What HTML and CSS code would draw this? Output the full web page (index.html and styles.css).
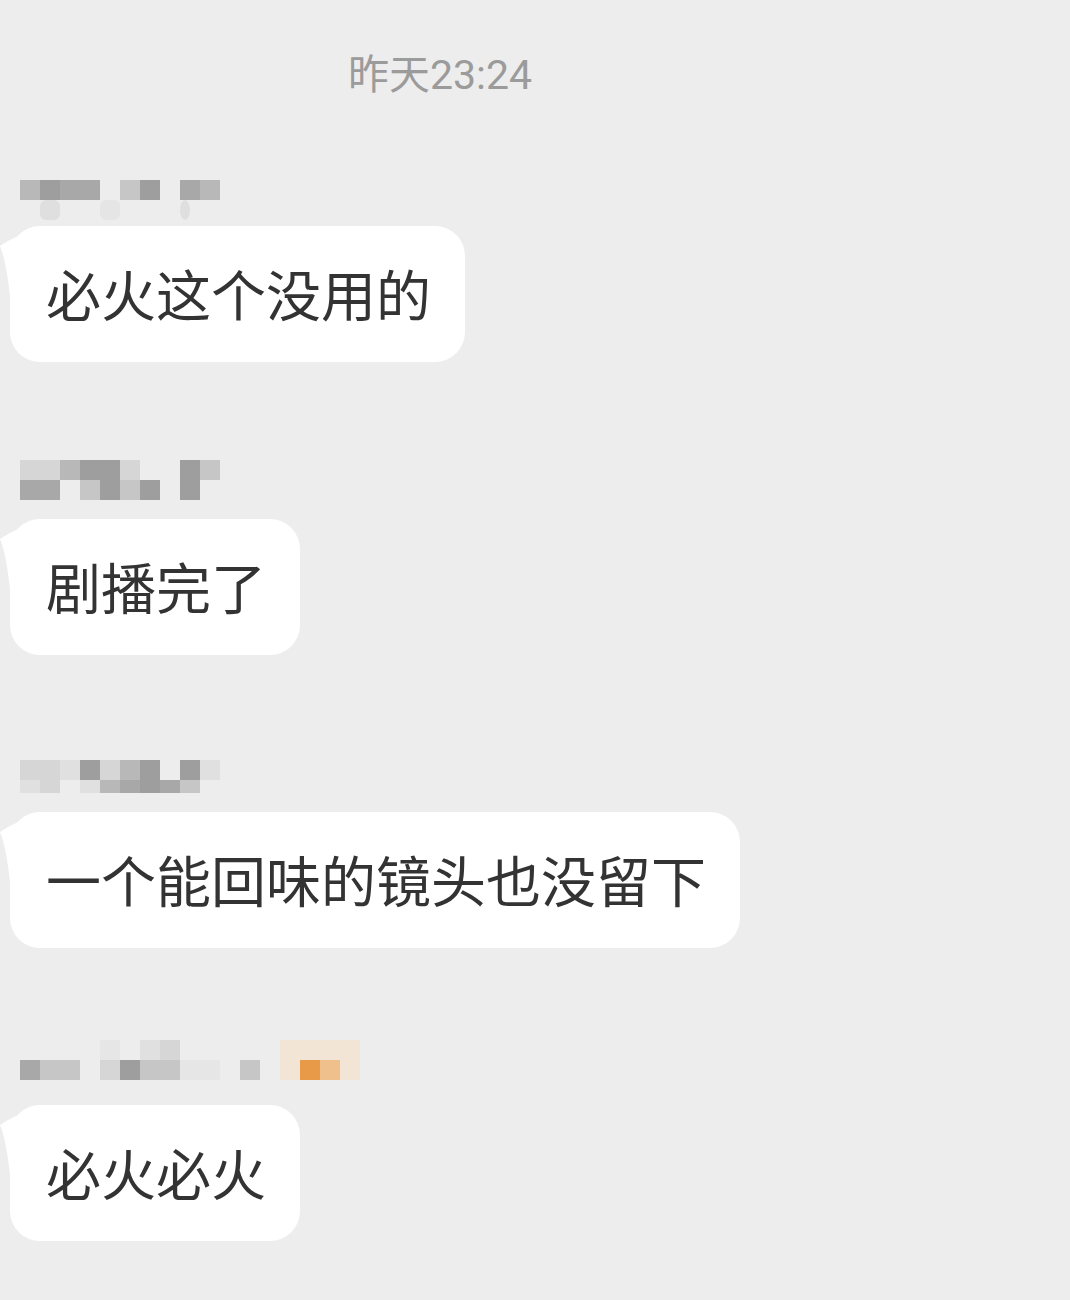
FILE: index.html
```html
<!DOCTYPE html>
<html lang="zh-CN">
<head>
    <meta charset="UTF-8">
    <meta name="viewport" content="width=device-width, initial-scale=1.0">
    <title>聊天记录</title>
    <link rel="stylesheet" href="styles.css">
</head>
<body>

<div class="chat">
    <div class="time">昨天23:24</div>

    <!-- message 1 -->
    <div class="msg">
        <div class="name name-1">
            <div class="row"><i class="s0 half"></i><i class="s3"></i><i class="s1"></i><i class="s2"></i><i class="s2"></i><i class="s0"></i><i class="s4"></i><i class="s1"></i><i class="s0"></i><i class="s2"></i><i class="s3"></i></div>
            <div class="row faint"><i class="s0 half"></i><i class="s0"></i><i class="s5"></i><i class="s0"></i><i class="s0"></i><i class="s6"></i><i class="s0"></i><i class="s0"></i><i class="s0"></i><i class="s5 dot"></i></div>
        </div>
        <div class="bubble">
            <svg class="tail" width="24" height="80" viewBox="0 0 24 80"><path d="M0 20 Q9 14 18 10 L24 10 L24 80 L10 80 L10 70 Q6 34 0 20 Z" fill="#fff"/></svg>
            必火这个没用的
        </div>
    </div>

    <!-- message 2 -->
    <div class="msg">
        <div class="name name-2">
            <div class="row"><i class="s5"></i><i class="s5"></i><i class="s3"></i><i class="s1"></i><i class="s1"></i><i class="s5"></i><i class="s0"></i><i class="s0"></i><i class="s1"></i><i class="s4"></i></div>
            <div class="row"><i class="s2"></i><i class="s2"></i><i class="s0"></i><i class="s4"></i><i class="s1"></i><i class="s4"></i><i class="s1"></i><i class="s0"></i><i class="s1"></i><i class="s0"></i></div>
        </div>
        <div class="bubble">
            <svg class="tail" width="24" height="80" viewBox="0 0 24 80"><path d="M0 20 Q9 14 18 10 L24 10 L24 80 L10 80 L10 70 Q6 34 0 20 Z" fill="#fff"/></svg>
            剧播完了
        </div>
    </div>

    <!-- message 3 -->
    <div class="msg">
        <div class="name name-3">
            <div class="row"><i class="s5"></i><i class="s5"></i><i class="s6"></i><i class="s1"></i><i class="s5"></i><i class="s3"></i><i class="s1"></i><i class="s0"></i><i class="s1"></i><i class="s6"></i></div>
            <div class="row short"><i class="s6"></i><i class="s5"></i><i class="s0"></i><i class="s6"></i><i class="s3"></i><i class="s2"></i><i class="s1"></i><i class="s2"></i><i class="s4"></i><i class="s0"></i></div>
        </div>
        <div class="bubble">
            <svg class="tail" width="24" height="80" viewBox="0 0 24 80"><path d="M0 20 Q9 14 18 10 L24 10 L24 80 L10 80 L10 70 Q6 34 0 20 Z" fill="#fff"/></svg>
            一个能回味的镜头也没留下
        </div>
    </div>

    <!-- message 4 -->
    <div class="msg">
        <div class="name name-4">
            <div class="row"><i class="s0"></i><i class="s0"></i><i class="s0"></i><i class="s0"></i><i class="s7"></i><i class="s0"></i><i class="s6"></i><i class="s5"></i><i class="s0"></i><i class="s0"></i><i class="s0"></i><i class="s0"></i><i class="s0"></i><i class="o1"></i><i class="o1"></i><i class="o1"></i><i class="o1"></i></div>
            <div class="row"><i class="s2"></i><i class="s4"></i><i class="s4"></i><i class="s0"></i><i class="s5"></i><i class="s1"></i><i class="s4"></i><i class="s4"></i><i class="s7"></i><i class="s7"></i><i class="s0"></i><i class="s4"></i><i class="s0"></i><i class="o1"></i><i class="o2"></i><i class="o3"></i><i class="o1"></i></div>
        </div>
        <div class="bubble">
            <svg class="tail" width="24" height="80" viewBox="0 0 24 80"><path d="M0 20 Q9 14 18 10 L24 10 L24 80 L10 80 L10 70 Q6 34 0 20 Z" fill="#fff"/></svg>
            必火必火
        </div>
    </div>
</div>

</body>
</html>
```

FILE: styles.css
```css
body, html {
    margin: 0;
    padding: 0;
    background: #ededed;
    font-family: "Noto Sans CJK SC", sans-serif;
}
.chat {
    width: 1070px;
    min-height: 1300px;
    display: flex;
    flex-direction: column;
    align-items: flex-start;
}
.time {
    align-self: stretch;
    padding: 55px 190px 0 0;
    height: 40px;
    line-height: 40px;
    text-align: center;
    font-family: Roboto, "Noto Sans CJK SC", sans-serif;
    font-size: 41px;
    color: #9b9b9b;
}
.time + .msg {
    margin-top: 61px;
}
.msg {
    display: flex;
    flex-direction: column;
    align-items: flex-start;
    margin-bottom: 87px;
}

/* blurred nickname mosaic */
.name {
    height: 70px;
    box-sizing: border-box;
    padding-left: 20px;
}
.name-1 { padding-top: 24px; padding-left: 12px; }
.name-2 { padding-top: 11px; }
.name-3 { padding-top: 18px; }
.name-4 { padding-top: 5px; }
.row {
    display: flex;
    height: 20px;
}
.row.short {
    height: 13px;
}
.row.faint i {
    opacity: 0.6;
    border-radius: 6px;
}
.row i {
    display: block;
    width: 20px;
    height: 100%;
}
.row i.half { width: 8px; }
.row i.dot { width: 10px; border-radius: 50%; }
.s0 { background: transparent; }
.s1 { background: #9e9e9e; }
.s2 { background: #a8a8a8; }
.s3 { background: #b8b8b8; }
.s4 { background: #c6c6c6; }
.s5 { background: #d6d6d6; }
.s6 { background: #e0e0e0; }
.s7 { background: #e6e6e6; }
.o1 { background: #f3e5d6; }
.o2 { background: #e89a48; }
.o3 { background: #f0c08c; }

.bubble {
    position: relative;
    margin-left: 10px;
    height: 136px;
    line-height: 132px;
    padding: 0 34px 0 36px;
    background: #fff;
    border-radius: 30px;
    font-size: 55px;
    color: #333;
    white-space: nowrap;
}
.tail {
    position: absolute;
    left: -10px;
    top: 0;
}
```
